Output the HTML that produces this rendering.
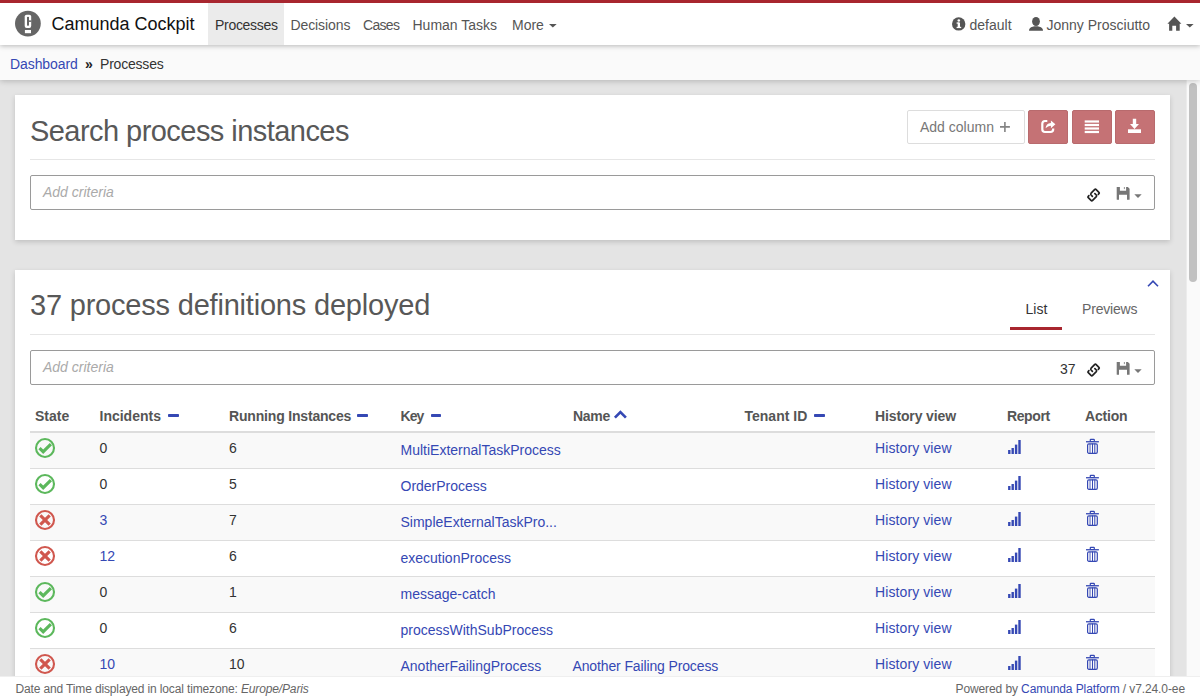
<!DOCTYPE html>
<html><head><meta charset="utf-8">
<style>
*{box-sizing:border-box;margin:0;padding:0}
html,body{width:1200px;height:700px;overflow:hidden;font-family:"Liberation Sans",sans-serif;color:#333;background:#e4e4e4;position:relative}
.t{position:absolute;white-space:nowrap}
.r{position:absolute;display:block}
#topbar{position:absolute;left:0;top:0;width:1200px;height:3px;background:#a8262f;z-index:6}
#header{position:absolute;left:0;top:0;width:1200px;height:45px;background:#fff;z-index:5;box-shadow:0 1px 5px rgba(0,0,0,.27)}
#crumbs{position:absolute;left:0;top:45px;width:1200px;height:35px;background:#fafafa;z-index:4;box-shadow:0 1px 6px rgba(0,0,0,.22)}
#main{position:absolute;left:0;top:80px;width:1186px;height:596px;overflow:hidden;background:#e4e4e4;z-index:1}
#sbar{position:absolute;left:1186px;top:80px;width:14px;height:596px;background:#fafafa;border-left:1px solid #ececec;z-index:2}
#sthumb{position:absolute;left:2px;top:3px;width:8px;height:199px;border-radius:4px;background:#c1c1c1}
#footer{position:absolute;left:0;top:676px;width:1200px;height:24px;background:#fff;z-index:3;border-top:1px solid #efefef}
.card{position:absolute;background:#fff;box-shadow:0 2px 5px rgba(0,0,0,.16)}
</style></head>
<body>
<div id="topbar"></div>
<div id="header">
<svg class="r" style="left:15px;top:10px" width="26" height="27" viewBox="0 0 26 27"><circle cx="12.9" cy="13.6" r="12.9" fill="#666"/><rect x="9.7" y="4.7" width="6.5" height="13.2" rx="1.9" fill="#fff"/><rect x="12" y="6.9" width="2" height="8.7" fill="#666"/><rect x="13.9" y="10.4" width="2.5" height="1.5" fill="#666"/><rect x="9.9" y="20" width="6.1" height="3.2" fill="#fff"/></svg>
<div class="t" style="left:51.5px;top:11.56px;font-size:18px;line-height:25px;color:#111;">Camunda Cockpit</div>
<div class="r" style="left:208px;top:3px;width:76px;height:42px;background:#ebebeb;"></div>
<div class="t" style="left:215px;top:15.15px;font-size:14px;line-height:20px;color:#333;letter-spacing:-0.3px;">Processes</div>
<div class="t" style="left:290.5px;top:15.15px;font-size:14px;line-height:20px;color:#555;letter-spacing:-0.1px;">Decisions</div>
<div class="t" style="left:363px;top:15.15px;font-size:14px;line-height:20px;color:#555;letter-spacing:-0.7px;">Cases</div>
<div class="t" style="left:412.5px;top:15.15px;font-size:14px;line-height:20px;color:#555;">Human Tasks</div>
<div class="t" style="left:512px;top:15.15px;font-size:14px;line-height:20px;color:#555;">More</div>
<svg class="r" style="left:549px;top:24px" width="8" height="4" viewBox="0 0 8 4"><path d="M0 0 H7.7 L3.85 3.6 Z" fill="#555"/></svg>
<svg class="r" style="left:952px;top:17px" width="14" height="14" viewBox="0 0 14 14"><circle cx="6.7" cy="6.9" r="6.7" fill="#555"/><rect x="5.7" y="5.6" width="2.3" height="5.3" fill="#fff"/><rect x="4.6" y="5.4" width="2.6" height="1.3" fill="#fff"/><rect x="4.6" y="9.8" width="4.6" height="1.3" fill="#fff"/><circle cx="6.8" cy="3.5" r="1.3" fill="#fff"/></svg>
<div class="t" style="left:969.5px;top:15.15px;font-size:14px;line-height:20px;color:#555;">default</div>
<svg class="r" style="left:1029px;top:17px" width="14" height="14" viewBox="0 0 14 14"><ellipse cx="7" cy="4.5" rx="3.9" ry="4.5" fill="#555"/><path d="M0 13.8 Q0 10.6 3.6 9.8 L5.3 9.2 H8.7 L10.4 9.8 Q14 10.6 14 13.8 Z" fill="#555"/></svg>
<div class="t" style="left:1046.5px;top:15.15px;font-size:14px;line-height:20px;color:#555;">Jonny Prosciutto</div>
<svg class="r" style="left:1166px;top:16px" width="16" height="15" viewBox="0 0 16 15"><path d="M8.4 0.5 L15.4 7.7 H13.7 V14.7 H10.1 V9.7 H6.3 V14.7 H3.1 V7.7 H1.4 Z" fill="#555"/></svg>
<svg class="r" style="left:1186px;top:24px" width="8" height="4" viewBox="0 0 8 4"><path d="M0 0 H7.6 L3.8 3.6 Z" fill="#555"/></svg>
</div>
<div id="crumbs">
<div class="t" style="left:10px;top:9.45px;font-size:14px;line-height:20px;color:#3548b4;letter-spacing:-0.08px;">Dashboard</div>
<div class="t" style="left:85px;top:9.45px;font-size:14px;line-height:20px;color:#222;font-weight:700;">&raquo;</div>
<div class="t" style="left:100px;top:9.45px;font-size:14px;line-height:20px;color:#333;letter-spacing:-0.2px;">Processes</div>
</div>
<div id="main">
<div class="card" style="left:15px;top:15px;width:1155px;height:145px"></div>
<div class="card" style="left:15px;top:190px;width:1155px;height:520px"></div>
<div class="t" style="left:30px;top:30.65px;font-size:29px;line-height:41px;color:#585858;letter-spacing:-0.55px;">Search process instances</div>
<div class="r" style="left:907px;top:30px;width:118px;height:34px;background:#fff;border:1px solid #ddd;border-radius:2px;"></div>
<div class="t" style="left:920px;top:37.15px;font-size:14px;line-height:20px;color:#777;">Add column</div>
<svg class="r" style="left:1000px;top:42px" width="10" height="10" viewBox="0 0 10 10"><path d="M4.1 0 h1.6 v4.1 h4.2 v1.7 h-4.2 v4.1 h-1.6 v-4.1 h-4.1 v-1.7 h4.1 z" fill="#848484"/></svg>
<div class="r" style="left:1028px;top:30px;width:40px;height:34px;background:#c57275;border:1px solid #b86a6d;border-radius:2px;"></div>
<div class="r" style="left:1072px;top:30px;width:40px;height:34px;background:#c57275;border:1px solid #b86a6d;border-radius:2px;"></div>
<div class="r" style="left:1115px;top:30px;width:40px;height:34px;background:#c57275;border:1px solid #b86a6d;border-radius:2px;"></div>
<svg class="r" style="left:1041px;top:39px" width="15" height="15" viewBox="0 0 15 15"><path d="M6.3 2 H4 Q1.3 2 1.3 4.7 V10.3 Q1.3 13 4 13 H9.5 Q12.2 13 12.2 10.3 V9.4" fill="none" stroke="#fff" stroke-width="2.2"/><path d="M4.6 9.3 Q4.9 4.5 9.9 4 V1.4 L14.4 5.3 L9.9 9.2 V6.8 Q6.8 6.8 4.6 9.3 Z" fill="#fff"/></svg>
<svg class="r" style="left:1084px;top:40px" width="16" height="14" viewBox="0 0 16 14"><rect x="0.7" y="0.4" width="14.3" height="2.2" fill="#fff"/><rect x="0.7" y="3.9" width="14.3" height="2.2" fill="#fff"/><rect x="0.7" y="7.4" width="14.3" height="2.2" fill="#fff"/><rect x="0.7" y="10.9" width="14.3" height="2.2" fill="#fff"/></svg>
<svg class="r" style="left:1127px;top:38px" width="15" height="16" viewBox="0 0 15 16"><path d="M5.8 0.8 H9.2 V6 H12 L7.5 11 L3 6 H5.8 Z" fill="#fff"/><rect x="1" y="11.3" width="13" height="3.7" fill="#fff"/></svg>
<div class="r" style="left:30px;top:79px;width:1125px;height:1px;background:#e6e6e6;"></div>
<div class="r" style="left:30px;top:95px;width:1125px;height:35px;background:#fff;border:1px solid #9a9a9a;border-radius:2px;"></div>
<div class="t" style="left:43px;top:102.15px;font-size:14px;line-height:20px;color:#aaa;font-style:italic;">Add criteria</div>
<svg class="r" style="left:1084px;top:105px" width="20" height="20" viewBox="0 0 20 20"><g fill="none" stroke="#222" stroke-width="1.7" stroke-linecap="round" stroke-linejoin="round"><path d="M8.4 11.3 L7.1 10 Q6.3 9.1 7.1 8.2 L10.6 4.6 Q11.4 3.8 12.2 4.6 L14.9 7.3 Q15.6 8 14.9 8.7 L14.3 9.3"/><path d="M10.9 8.6 L12.3 10 Q13 10.8 12.3 11.6 L8.6 15.4 Q7.8 16.2 7 15.4 L4.3 12.7 Q3.6 12 4.3 11.3 L4.9 10.7"/></g></svg>
<svg class="r" style="left:1116px;top:107px" width="14" height="14" viewBox="0 0 14 14"><path d="M0.7 0 H3.9 V3.7 H10.1 V0 H11.9 L13.6 1.8 V12.2 Q13.6 12.7 13.1 12.7 H11 V7.7 H3 V12.7 H1.2 Q0.7 12.7 0.7 12.2 Z" fill="#777"/><rect x="7.9" y="0" width="0.8" height="2.1" fill="#777"/></svg>
<svg class="r" style="left:1134px;top:114px" width="8" height="5" viewBox="0 0 8 5"><path d="M0.3 0.3 h7.4 l-3.7 3.6 z" fill="#777"/></svg>
<svg class="r" style="left:1147px;top:199px" width="12" height="9" viewBox="0 0 12 9"><path d="M1 7.2 L6 2.2 L11 7.2" fill="none" stroke="#3548b4" stroke-width="1.6"/></svg>
<div class="t" style="left:30px;top:205.25px;font-size:29px;line-height:41px;color:#585858;letter-spacing:-0.2px;">37 process definitions deployed</div>
<div class="t" style="left:1025.5px;top:219.15px;font-size:14px;line-height:20px;color:#333;">List</div>
<div class="t" style="left:1082px;top:219.15px;font-size:14px;line-height:20px;color:#666;letter-spacing:-0.18px;">Previews</div>
<div class="r" style="left:1010px;top:247px;width:52px;height:3px;background:#a8262f;"></div>
<div class="r" style="left:30px;top:254px;width:1125px;height:1px;background:#e6e6e6;"></div>
<div class="r" style="left:30px;top:270px;width:1125px;height:35px;background:#fff;border:1px solid #9a9a9a;border-radius:2px;"></div>
<div class="t" style="left:43px;top:277.15px;font-size:14px;line-height:20px;color:#aaa;font-style:italic;">Add criteria</div>
<div class="t" style="left:1060px;top:278.65px;font-size:14px;line-height:20px;color:#333;">37</div>
<svg class="r" style="left:1084px;top:280px" width="20" height="20" viewBox="0 0 20 20"><g fill="none" stroke="#222" stroke-width="1.7" stroke-linecap="round" stroke-linejoin="round"><path d="M8.4 11.3 L7.1 10 Q6.3 9.1 7.1 8.2 L10.6 4.6 Q11.4 3.8 12.2 4.6 L14.9 7.3 Q15.6 8 14.9 8.7 L14.3 9.3"/><path d="M10.9 8.6 L12.3 10 Q13 10.8 12.3 11.6 L8.6 15.4 Q7.8 16.2 7 15.4 L4.3 12.7 Q3.6 12 4.3 11.3 L4.9 10.7"/></g></svg>
<svg class="r" style="left:1116px;top:282px" width="14" height="14" viewBox="0 0 14 14"><path d="M0.7 0 H3.9 V3.7 H10.1 V0 H11.9 L13.6 1.8 V12.2 Q13.6 12.7 13.1 12.7 H11 V7.7 H3 V12.7 H1.2 Q0.7 12.7 0.7 12.2 Z" fill="#777"/><rect x="7.9" y="0" width="0.8" height="2.1" fill="#777"/></svg>
<svg class="r" style="left:1134px;top:289px" width="8" height="5" viewBox="0 0 8 5"><path d="M0.3 0.3 h7.4 l-3.7 3.6 z" fill="#777"/></svg>
<div class="t" style="left:35px;top:326.15px;font-size:14px;line-height:20px;color:#555;font-weight:700;">State</div>
<div class="t" style="left:99.5px;top:326.15px;font-size:14px;line-height:20px;color:#555;font-weight:700;">Incidents</div>
<div class="r" style="left:168px;top:333.8px;width:10.5px;height:3.2px;background:#3548b4;border-radius:0.8px;"></div>
<div class="t" style="left:229px;top:326.15px;font-size:14px;line-height:20px;color:#555;font-weight:700;letter-spacing:-0.18px;">Running Instances</div>
<div class="r" style="left:357.2px;top:333.8px;width:10.5px;height:3.2px;background:#3548b4;border-radius:0.8px;"></div>
<div class="t" style="left:400.5px;top:326.15px;font-size:14px;line-height:20px;color:#555;font-weight:700;letter-spacing:-0.9px;">Key</div>
<div class="r" style="left:430.6px;top:333.8px;width:10.5px;height:3.2px;background:#3548b4;border-radius:0.8px;"></div>
<div class="t" style="left:573px;top:326.15px;font-size:14px;line-height:20px;color:#555;font-weight:700;letter-spacing:-0.3px;">Name</div>
<svg class="r" style="left:613px;top:329px" width="15" height="11" viewBox="0 0 15 11"><path d="M1.9 8.6 L7.4 3.1 L12.9 8.6" fill="none" stroke="#3548b4" stroke-width="2.7"/></svg>
<div class="t" style="left:744.5px;top:326.15px;font-size:14px;line-height:20px;color:#555;font-weight:700;">Tenant ID</div>
<div class="r" style="left:814px;top:333.8px;width:10.5px;height:3.2px;background:#3548b4;border-radius:0.8px;"></div>
<div class="t" style="left:875px;top:326.15px;font-size:14px;line-height:20px;color:#555;font-weight:700;letter-spacing:-0.13px;">History view</div>
<div class="t" style="left:1007px;top:326.15px;font-size:14px;line-height:20px;color:#555;font-weight:700;letter-spacing:-0.4px;">Report</div>
<div class="t" style="left:1085px;top:326.15px;font-size:14px;line-height:20px;color:#555;font-weight:700;letter-spacing:-0.2px;">Action</div>
<div class="r" style="left:30px;top:351px;width:1125px;height:2px;background:#dddddd;"></div>
<div class="r" style="left:30px;top:353px;width:1125px;height:35px;background:#f9f9f9;"></div>
<div class="r" style="left:30px;top:388px;width:1125px;height:1px;background:#dddddd;"></div>
<svg class="r" style="left:34px;top:357px" width="22" height="22" viewBox="0 0 22 22"><circle cx="11" cy="11" r="9" fill="none" stroke="#5cb85c" stroke-width="2.1"/><path d="M4.4 12.2 L6.6 10 L9.2 12.6 L15.8 6 L18 8.2 L9.2 17 Z" fill="#5cb85c"/></svg>
<div class="t" style="left:99.5px;top:358.15px;font-size:14px;line-height:20px;color:#333;">0</div>
<div class="t" style="left:229px;top:358.15px;font-size:14px;line-height:20px;color:#333;">6</div>
<div class="t" style="left:400.5px;top:360.15px;font-size:14px;line-height:20px;color:#3548b4;">MultiExternalTaskProcess</div>
<div class="t" style="left:875px;top:358.15px;font-size:14px;line-height:20px;color:#3548b4;letter-spacing:0.1px;">History view</div>
<svg class="r" style="left:1008px;top:360px" width="14" height="15" viewBox="0 0 14 15"><rect x="0.1" y="10" width="2.4" height="4" fill="#3548b4"/><rect x="3.5" y="8" width="2.4" height="6" fill="#3548b4"/><rect x="6.8999999999999995" y="4.6" width="2.4" height="9.4" fill="#3548b4"/><rect x="10.299999999999999" y="0" width="2.4" height="14" fill="#3548b4"/></svg>
<svg class="r" style="left:1085px;top:358px" width="15" height="16" viewBox="0 0 15 16"><g fill="none" stroke="#3548b4" stroke-width="1.2"><rect x="5.3" y="1.3" width="4" height="2.2" rx="0.5"/><rect x="2.6" y="5.9" width="9.7" height="9.4" rx="1.3"/></g><g fill="#3548b4"><rect x="1" y="3.1" width="12.9" height="1.3"/><rect x="7" y="5.5" width="1" height="10"/><rect x="9.3" y="5.5" width="1" height="10"/><rect x="4.1" y="6" width="1.9" height="9.5" opacity="0.45"/></g></svg>
<div class="r" style="left:30px;top:424px;width:1125px;height:1px;background:#dddddd;"></div>
<svg class="r" style="left:34px;top:393px" width="22" height="22" viewBox="0 0 22 22"><circle cx="11" cy="11" r="9" fill="none" stroke="#5cb85c" stroke-width="2.1"/><path d="M4.4 12.2 L6.6 10 L9.2 12.6 L15.8 6 L18 8.2 L9.2 17 Z" fill="#5cb85c"/></svg>
<div class="t" style="left:99.5px;top:394.15px;font-size:14px;line-height:20px;color:#333;">0</div>
<div class="t" style="left:229px;top:394.15px;font-size:14px;line-height:20px;color:#333;">5</div>
<div class="t" style="left:400.5px;top:396.15px;font-size:14px;line-height:20px;color:#3548b4;">OrderProcess</div>
<div class="t" style="left:875px;top:394.15px;font-size:14px;line-height:20px;color:#3548b4;letter-spacing:0.1px;">History view</div>
<svg class="r" style="left:1008px;top:396px" width="14" height="15" viewBox="0 0 14 15"><rect x="0.1" y="10" width="2.4" height="4" fill="#3548b4"/><rect x="3.5" y="8" width="2.4" height="6" fill="#3548b4"/><rect x="6.8999999999999995" y="4.6" width="2.4" height="9.4" fill="#3548b4"/><rect x="10.299999999999999" y="0" width="2.4" height="14" fill="#3548b4"/></svg>
<svg class="r" style="left:1085px;top:394px" width="15" height="16" viewBox="0 0 15 16"><g fill="none" stroke="#3548b4" stroke-width="1.2"><rect x="5.3" y="1.3" width="4" height="2.2" rx="0.5"/><rect x="2.6" y="5.9" width="9.7" height="9.4" rx="1.3"/></g><g fill="#3548b4"><rect x="1" y="3.1" width="12.9" height="1.3"/><rect x="7" y="5.5" width="1" height="10"/><rect x="9.3" y="5.5" width="1" height="10"/><rect x="4.1" y="6" width="1.9" height="9.5" opacity="0.45"/></g></svg>
<div class="r" style="left:30px;top:425px;width:1125px;height:35px;background:#f9f9f9;"></div>
<div class="r" style="left:30px;top:460px;width:1125px;height:1px;background:#dddddd;"></div>
<svg class="r" style="left:34px;top:429px" width="22" height="22" viewBox="0 0 22 22"><circle cx="11" cy="11" r="9" fill="none" stroke="#d0574e" stroke-width="2.1"/><path d="M5.2 7.4 L7.4 5.2 L11 8.8 L14.6 5.2 L16.8 7.4 L13.2 11 L16.8 14.6 L14.6 16.8 L11 13.2 L7.4 16.8 L5.2 14.6 L8.8 11 Z" fill="#d0574e"/></svg>
<div class="t" style="left:99.5px;top:430.15px;font-size:14px;line-height:20px;color:#3548b4;">3</div>
<div class="t" style="left:229px;top:430.15px;font-size:14px;line-height:20px;color:#333;">7</div>
<div class="t" style="left:400.5px;top:432.15px;font-size:14px;line-height:20px;color:#3548b4;">SimpleExternalTaskPro...</div>
<div class="t" style="left:875px;top:430.15px;font-size:14px;line-height:20px;color:#3548b4;letter-spacing:0.1px;">History view</div>
<svg class="r" style="left:1008px;top:432px" width="14" height="15" viewBox="0 0 14 15"><rect x="0.1" y="10" width="2.4" height="4" fill="#3548b4"/><rect x="3.5" y="8" width="2.4" height="6" fill="#3548b4"/><rect x="6.8999999999999995" y="4.6" width="2.4" height="9.4" fill="#3548b4"/><rect x="10.299999999999999" y="0" width="2.4" height="14" fill="#3548b4"/></svg>
<svg class="r" style="left:1085px;top:430px" width="15" height="16" viewBox="0 0 15 16"><g fill="none" stroke="#3548b4" stroke-width="1.2"><rect x="5.3" y="1.3" width="4" height="2.2" rx="0.5"/><rect x="2.6" y="5.9" width="9.7" height="9.4" rx="1.3"/></g><g fill="#3548b4"><rect x="1" y="3.1" width="12.9" height="1.3"/><rect x="7" y="5.5" width="1" height="10"/><rect x="9.3" y="5.5" width="1" height="10"/><rect x="4.1" y="6" width="1.9" height="9.5" opacity="0.45"/></g></svg>
<div class="r" style="left:30px;top:496px;width:1125px;height:1px;background:#dddddd;"></div>
<svg class="r" style="left:34px;top:465px" width="22" height="22" viewBox="0 0 22 22"><circle cx="11" cy="11" r="9" fill="none" stroke="#d0574e" stroke-width="2.1"/><path d="M5.2 7.4 L7.4 5.2 L11 8.8 L14.6 5.2 L16.8 7.4 L13.2 11 L16.8 14.6 L14.6 16.8 L11 13.2 L7.4 16.8 L5.2 14.6 L8.8 11 Z" fill="#d0574e"/></svg>
<div class="t" style="left:99.5px;top:466.15px;font-size:14px;line-height:20px;color:#3548b4;">12</div>
<div class="t" style="left:229px;top:466.15px;font-size:14px;line-height:20px;color:#333;">6</div>
<div class="t" style="left:400.5px;top:468.15px;font-size:14px;line-height:20px;color:#3548b4;">executionProcess</div>
<div class="t" style="left:875px;top:466.15px;font-size:14px;line-height:20px;color:#3548b4;letter-spacing:0.1px;">History view</div>
<svg class="r" style="left:1008px;top:468px" width="14" height="15" viewBox="0 0 14 15"><rect x="0.1" y="10" width="2.4" height="4" fill="#3548b4"/><rect x="3.5" y="8" width="2.4" height="6" fill="#3548b4"/><rect x="6.8999999999999995" y="4.6" width="2.4" height="9.4" fill="#3548b4"/><rect x="10.299999999999999" y="0" width="2.4" height="14" fill="#3548b4"/></svg>
<svg class="r" style="left:1085px;top:466px" width="15" height="16" viewBox="0 0 15 16"><g fill="none" stroke="#3548b4" stroke-width="1.2"><rect x="5.3" y="1.3" width="4" height="2.2" rx="0.5"/><rect x="2.6" y="5.9" width="9.7" height="9.4" rx="1.3"/></g><g fill="#3548b4"><rect x="1" y="3.1" width="12.9" height="1.3"/><rect x="7" y="5.5" width="1" height="10"/><rect x="9.3" y="5.5" width="1" height="10"/><rect x="4.1" y="6" width="1.9" height="9.5" opacity="0.45"/></g></svg>
<div class="r" style="left:30px;top:497px;width:1125px;height:35px;background:#f9f9f9;"></div>
<div class="r" style="left:30px;top:532px;width:1125px;height:1px;background:#dddddd;"></div>
<svg class="r" style="left:34px;top:501px" width="22" height="22" viewBox="0 0 22 22"><circle cx="11" cy="11" r="9" fill="none" stroke="#5cb85c" stroke-width="2.1"/><path d="M4.4 12.2 L6.6 10 L9.2 12.6 L15.8 6 L18 8.2 L9.2 17 Z" fill="#5cb85c"/></svg>
<div class="t" style="left:99.5px;top:502.15px;font-size:14px;line-height:20px;color:#333;">0</div>
<div class="t" style="left:229px;top:502.15px;font-size:14px;line-height:20px;color:#333;">1</div>
<div class="t" style="left:400.5px;top:504.15px;font-size:14px;line-height:20px;color:#3548b4;">message-catch</div>
<div class="t" style="left:875px;top:502.15px;font-size:14px;line-height:20px;color:#3548b4;letter-spacing:0.1px;">History view</div>
<svg class="r" style="left:1008px;top:504px" width="14" height="15" viewBox="0 0 14 15"><rect x="0.1" y="10" width="2.4" height="4" fill="#3548b4"/><rect x="3.5" y="8" width="2.4" height="6" fill="#3548b4"/><rect x="6.8999999999999995" y="4.6" width="2.4" height="9.4" fill="#3548b4"/><rect x="10.299999999999999" y="0" width="2.4" height="14" fill="#3548b4"/></svg>
<svg class="r" style="left:1085px;top:502px" width="15" height="16" viewBox="0 0 15 16"><g fill="none" stroke="#3548b4" stroke-width="1.2"><rect x="5.3" y="1.3" width="4" height="2.2" rx="0.5"/><rect x="2.6" y="5.9" width="9.7" height="9.4" rx="1.3"/></g><g fill="#3548b4"><rect x="1" y="3.1" width="12.9" height="1.3"/><rect x="7" y="5.5" width="1" height="10"/><rect x="9.3" y="5.5" width="1" height="10"/><rect x="4.1" y="6" width="1.9" height="9.5" opacity="0.45"/></g></svg>
<div class="r" style="left:30px;top:568px;width:1125px;height:1px;background:#dddddd;"></div>
<svg class="r" style="left:34px;top:537px" width="22" height="22" viewBox="0 0 22 22"><circle cx="11" cy="11" r="9" fill="none" stroke="#5cb85c" stroke-width="2.1"/><path d="M4.4 12.2 L6.6 10 L9.2 12.6 L15.8 6 L18 8.2 L9.2 17 Z" fill="#5cb85c"/></svg>
<div class="t" style="left:99.5px;top:538.15px;font-size:14px;line-height:20px;color:#333;">0</div>
<div class="t" style="left:229px;top:538.15px;font-size:14px;line-height:20px;color:#333;">6</div>
<div class="t" style="left:400.5px;top:540.15px;font-size:14px;line-height:20px;color:#3548b4;">processWithSubProcess</div>
<div class="t" style="left:875px;top:538.15px;font-size:14px;line-height:20px;color:#3548b4;letter-spacing:0.1px;">History view</div>
<svg class="r" style="left:1008px;top:540px" width="14" height="15" viewBox="0 0 14 15"><rect x="0.1" y="10" width="2.4" height="4" fill="#3548b4"/><rect x="3.5" y="8" width="2.4" height="6" fill="#3548b4"/><rect x="6.8999999999999995" y="4.6" width="2.4" height="9.4" fill="#3548b4"/><rect x="10.299999999999999" y="0" width="2.4" height="14" fill="#3548b4"/></svg>
<svg class="r" style="left:1085px;top:538px" width="15" height="16" viewBox="0 0 15 16"><g fill="none" stroke="#3548b4" stroke-width="1.2"><rect x="5.3" y="1.3" width="4" height="2.2" rx="0.5"/><rect x="2.6" y="5.9" width="9.7" height="9.4" rx="1.3"/></g><g fill="#3548b4"><rect x="1" y="3.1" width="12.9" height="1.3"/><rect x="7" y="5.5" width="1" height="10"/><rect x="9.3" y="5.5" width="1" height="10"/><rect x="4.1" y="6" width="1.9" height="9.5" opacity="0.45"/></g></svg>
<div class="r" style="left:30px;top:569px;width:1125px;height:35px;background:#f9f9f9;"></div>
<div class="r" style="left:30px;top:604px;width:1125px;height:1px;background:#dddddd;"></div>
<svg class="r" style="left:34px;top:573px" width="22" height="22" viewBox="0 0 22 22"><circle cx="11" cy="11" r="9" fill="none" stroke="#d0574e" stroke-width="2.1"/><path d="M5.2 7.4 L7.4 5.2 L11 8.8 L14.6 5.2 L16.8 7.4 L13.2 11 L16.8 14.6 L14.6 16.8 L11 13.2 L7.4 16.8 L5.2 14.6 L8.8 11 Z" fill="#d0574e"/></svg>
<div class="t" style="left:99.5px;top:574.15px;font-size:14px;line-height:20px;color:#3548b4;">10</div>
<div class="t" style="left:229px;top:574.15px;font-size:14px;line-height:20px;color:#333;">10</div>
<div class="t" style="left:400.5px;top:576.15px;font-size:14px;line-height:20px;color:#3548b4;">AnotherFailingProcess</div>
<div class="t" style="left:572.5px;top:576.15px;font-size:14px;line-height:20px;color:#3548b4;letter-spacing:-0.13px;">Another Failing Process</div>
<div class="t" style="left:875px;top:574.15px;font-size:14px;line-height:20px;color:#3548b4;letter-spacing:0.1px;">History view</div>
<svg class="r" style="left:1008px;top:576px" width="14" height="15" viewBox="0 0 14 15"><rect x="0.1" y="10" width="2.4" height="4" fill="#3548b4"/><rect x="3.5" y="8" width="2.4" height="6" fill="#3548b4"/><rect x="6.8999999999999995" y="4.6" width="2.4" height="9.4" fill="#3548b4"/><rect x="10.299999999999999" y="0" width="2.4" height="14" fill="#3548b4"/></svg>
<svg class="r" style="left:1085px;top:574px" width="15" height="16" viewBox="0 0 15 16"><g fill="none" stroke="#3548b4" stroke-width="1.2"><rect x="5.3" y="1.3" width="4" height="2.2" rx="0.5"/><rect x="2.6" y="5.9" width="9.7" height="9.4" rx="1.3"/></g><g fill="#3548b4"><rect x="1" y="3.1" width="12.9" height="1.3"/><rect x="7" y="5.5" width="1" height="10"/><rect x="9.3" y="5.5" width="1" height="10"/><rect x="4.1" y="6" width="1.9" height="9.5" opacity="0.45"/></g></svg>
</div>
<div id="sbar"><div id="sthumb"></div></div>
<div id="footer">
<div class="t" style="left:15.5px;top:4.04px;font-size:12px;line-height:17px;color:#666;letter-spacing:-0.14px;">Date and Time displayed in local timezone: <i>Europe/Paris</i></div>
<div class="t" style="left:955.5px;top:4.04px;font-size:12px;line-height:17px;color:#666;letter-spacing:-0.1px;">Powered by <span style="color:#3548b4">Camunda Platform</span> / v7.24.0-ee</div>
</div>
</body></html>
